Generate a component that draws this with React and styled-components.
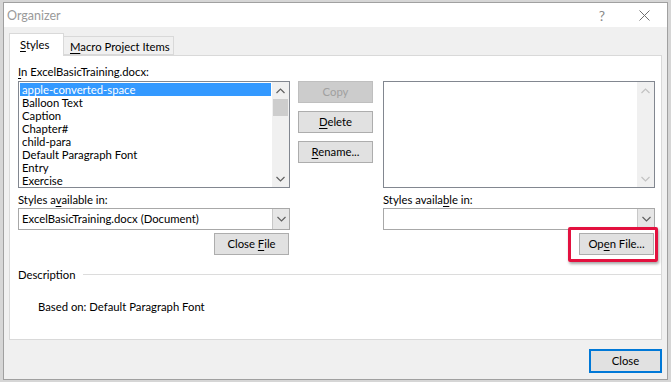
import React from "react";
import styled, { createGlobalStyle } from "styled-components";

const styleNames = [
    "apple-converted-space",
    "Balloon Text",
    "Caption",
    "Chapter#",
    "child-para",
    "Default Paragraph Font",
    "Entry",
    "Exercise",
];

export default function App() {
    return (
        <>
            <GlobalStyle />
            <Window>
                <TitleBar>
                    <Title>Organizer</Title>
                    <TitleButton>?</TitleButton>
                    <TitleButton wide>
                        <svg width="11" height="11" viewBox="0 0 11 11">
                            <path d="M0.5 0.5 L10.5 10.5 M10.5 0.5 L0.5 10.5" stroke="#707070" strokeWidth="1" fill="none" />
                        </svg>
                    </TitleButton>
                </TitleBar>
                <Body>
                    <Tabs>
                        <Tab active><span><u>S</u>tyles</span></Tab>
                        <Tab><span><u>M</u>acro Project Items</span></Tab>
                    </Tabs>
                    <Panel>
                        <Columns>
                            <Column>
                                <Label><u>I</u>n ExcelBasicTraining.docx:</Label>
                                <ListBox>
                                    <Items>
                                        {styleNames.map((name, i) => (
                                            <Item key={name} selected={i === 0}>{name}</Item>
                                        ))}
                                    </Items>
                                    <ScrollBar>
                                        <Arrow><Chevron up /></Arrow>
                                        <Thumb />
                                        <Track />
                                        <Arrow><Chevron /></Arrow>
                                    </ScrollBar>
                                </ListBox>
                                <Label spaced>Styles a<u>v</u>ailable in:</Label>
                                <Combo>
                                    <ComboText>ExcelBasicTraining.docx (Document)</ComboText>
                                    <DropButton><Chevron /></DropButton>
                                </Combo>
                                <ButtonRow>
                                    <Button><span>Close <u>F</u>ile</span></Button>
                                </ButtonRow>
                            </Column>
                            <MiddleColumn>
                                <Button disabled><span>Copy</span></Button>
                                <Button><span><u>D</u>elete</span></Button>
                                <Button><span><u>R</u>ename...</span></Button>
                            </MiddleColumn>
                            <Column>
                                <Label />
                                <ListBox>
                                    <Items />
                                    <ScrollBar>
                                        <Arrow><Chevron up faded /></Arrow>
                                        <Track />
                                        <Arrow><Chevron faded /></Arrow>
                                    </ScrollBar>
                                </ListBox>
                                <Label spaced>Styles availa<u>b</u>le in:</Label>
                                <Combo>
                                    <ComboText />
                                    <DropButton><Chevron /></DropButton>
                                </Combo>
                                <ButtonRow>
                                    <Highlighted>
                                        <Button><span>Op<u>e</u>n File...</span></Button>
                                        <RedBox />
                                    </Highlighted>
                                </ButtonRow>
                            </Column>
                        </Columns>
                        <GroupHeader>
                            <span>Description</span>
                            <Rule />
                        </GroupHeader>
                        <DescriptionText>Based on: Default Paragraph Font</DescriptionText>
                    </Panel>
                    <Footer>
                        <Button primary><span>Close</span></Button>
                    </Footer>
                </Body>
            </Window>
        </>
    );
}

function Chevron(props) {
    const color = props.faded ? "#c2c2c2" : "#606060";
    return (
        <svg width="9" height="6" viewBox="0 0 9 6">
            <path
                d={props.up ? "M0.5 5 L4.5 1 L8.5 5" : "M0.5 1 L4.5 5 L8.5 1"}
                stroke={color}
                strokeWidth="1.2"
                fill="none"
            />
        </svg>
    );
}

const GlobalStyle = createGlobalStyle`
    body {
        margin: 0;
        background-color: #d6d6d6;
        font-family: "Segoe UI", Lato, "Noto Sans", sans-serif;
        font-size: 11.3px;
        color: #000000;
    }
    u {
        text-decoration: underline;
        text-underline-offset: 2px;
    }
`

const Window = styled.div`
    display: flex;
    flex-direction: column;
    width: 665px;
    height: 378px;
    margin: 2px 0 0 3px;
    box-sizing: border-box;
    border: 1px solid #a0a0a0;
    background-color: #f0f0f0;
`

const TitleBar = styled.div`
    display: flex;
    align-items: center;
    height: 24px;
    background-color: #ffffff;
    padding-left: 3px;
`

const Title = styled.div`
    flex: 1;
    font-size: 12.5px;
    color: #9a9a9a;
    margin-top: 1px;
`

const TitleButton = styled.div`
    display: flex;
    align-items: center;
    justify-content: center;
    width: ${props => props.wide ? "46px" : "30px"};
    margin-right: ${props => props.wide ? "0" : "4px"};
    color: #8a8a8a;
    font-size: 14px;
`

const Body = styled.div`
    display: flex;
    flex-direction: column;
    flex: 1;
    padding: 6px 5px 0 5px;
`

const Tabs = styled.div`
    display: flex;
    align-items: flex-end;
    height: 22px;
    position: relative;
    z-index: 1;
`

const Tab = styled.div`
    display: flex;
    align-items: center;
    box-sizing: border-box;
    width: ${props => props.active ? "55px" : "110px"};
    height: ${props => props.active ? "23px" : "19px"};
    margin-bottom: ${props => props.active ? "-1px" : "0"};
    padding: ${props => props.active ? "0 0 1px 10px" : "1px 0 0 6px"};
    background-color: ${props => props.active ? "#ffffff" : "#f0f0f0"};
    border: 1px solid #d9d9d9;
    border-bottom: ${props => props.active ? "none" : "1px solid #d9d9d9"};
    border-left: ${props => props.active ? "1px solid #d9d9d9" : "none"};
`

const Panel = styled.div`
    display: flex;
    flex-direction: column;
    height: 285px;
    box-sizing: border-box;
    border: 1px solid #d9d9d9;
    background-color: #ffffff;
    padding: 8px 6px 0 8px;
`

const Columns = styled.div`
    display: flex;
    gap: 8px;
`

const Column = styled.div`
    display: flex;
    flex-direction: column;
    width: 272px;
`

const MiddleColumn = styled.div`
    display: flex;
    flex-direction: column;
    gap: 8px;
    width: 75px;
    margin: 17px 2px 0 0;
`

const Label = styled.div`
    height: 15px;
    line-height: 15px;
    margin: ${props => props.spaced ? "4px 0 1px 0" : "0 0 2px 0"};
    white-space: nowrap;
`

const ListBox = styled.div`
    display: flex;
    height: 107px;
    box-sizing: border-box;
    border: 1px solid #828790;
    background-color: #ffffff;
`

const Items = styled.div`
    flex: 1;
    padding: 1px 1px 0 1px;
    overflow: hidden;
`

const Item = styled.div`
    height: 13px;
    line-height: 13px;
    padding-left: 2px;
    white-space: nowrap;
    background-color: ${props => props.selected ? "#3399ff" : "transparent"};
    color: ${props => props.selected ? "#ffffff" : "#000000"};
`

const ScrollBar = styled.div`
    display: flex;
    flex-direction: column;
    width: 17px;
    background-color: #f0f0f0;
`

const Arrow = styled.div`
    display: flex;
    align-items: center;
    justify-content: center;
    height: 17px;
`

const Thumb = styled.div`
    height: 17px;
    margin: 0 1px;
    background-color: #cdcdcd;
`

const Track = styled.div`
    flex: 1;
`

const Combo = styled.div`
    display: flex;
    height: 22px;
    box-sizing: border-box;
    border: 1px solid #a8a8a8;
    background-color: #ffffff;
`

const ComboText = styled.div`
    flex: 1;
    line-height: 20px;
    padding-left: 3px;
    white-space: nowrap;
`

const DropButton = styled.div`
    display: flex;
    align-items: center;
    justify-content: center;
    width: 16px;
    background-color: #e6e6e6;
    border-left: 1px solid #c8c8c8;
`

const ButtonRow = styled.div`
    display: flex;
    justify-content: flex-end;
    margin-top: 3px;
    padding-right: 1px;
`

const Button = styled.div`
    display: flex;
    align-items: center;
    justify-content: center;
    box-sizing: border-box;
    width: ${props => props.primary ? "73px" : "75px"};
    height: ${props => props.primary ? "24px" : "22px"};
    background-color: ${props => props.disabled ? "#cccccc" : "#e1e1e1"};
    border: ${props => props.primary ? "2px solid #0078d7" : props.disabled ? "1px solid #bfbfbf" : "1px solid #adadad"};
    color: ${props => props.disabled ? "#a0a0a0" : "#000000"};
    padding-bottom: 1px;
    white-space: nowrap;
`

const Highlighted = styled.div`
    position: relative;
`

const RedBox = styled.div`
    position: absolute;
    top: -6px;
    left: -11px;
    right: -4px;
    bottom: -7px;
    border: 3px solid #e3113f;
    border-radius: 2px;
    box-shadow: 1px 2px 3px rgba(0, 0, 0, 0.35);
`

const GroupHeader = styled.div`
    display: flex;
    align-items: center;
    gap: 7px;
    height: 16px;
    margin: 11px -6px 0 0;
`

const Rule = styled.div`
    flex: 1;
    height: 1px;
    background-color: #dcdcdc;
`

const DescriptionText = styled.div`
    line-height: 16px;
    margin: 17px 0 0 20px;
`

const Footer = styled.div`
    display: flex;
    justify-content: flex-end;
    padding-top: 9px;
`
